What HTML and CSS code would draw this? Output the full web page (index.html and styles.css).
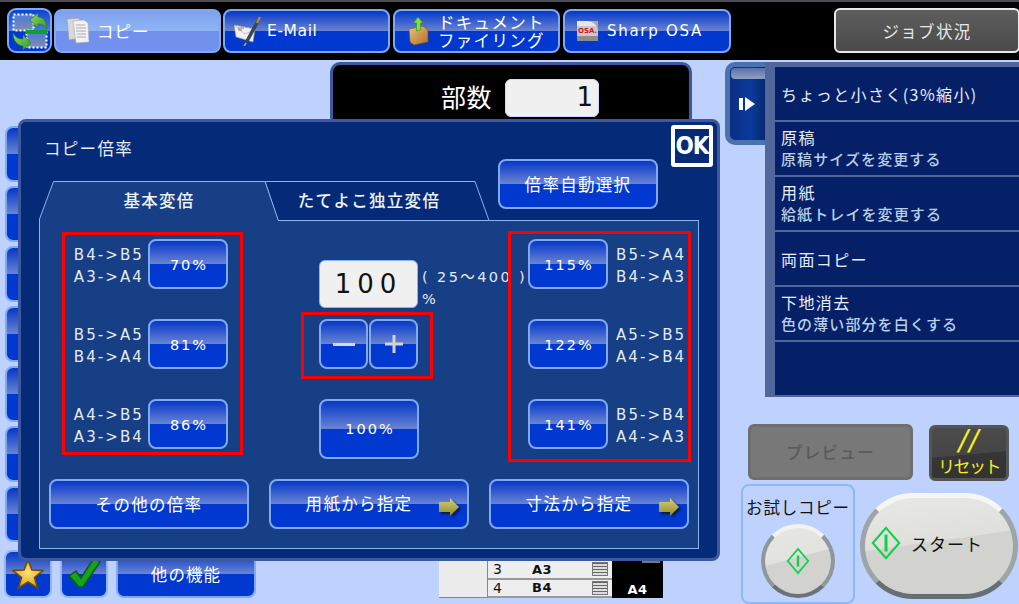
FILE: index.html
```html
<!DOCTYPE html>
<html lang="ja">
<head>
<meta charset="utf-8">
<title>コピー倍率</title>
<link rel="stylesheet" href="styles.css">
</head>
<body>
<div class="page">
  <header class="topbar">
    <button class="btn mode-switch">
      <svg viewBox="0 0 40 40" width="40" height="40">
        <defs>
          <linearGradient id="pane" x1="0" y1="0" x2="0" y2="1"><stop offset="0" stop-color="#4f86e8"/><stop offset=".3" stop-color="#5a7cc8"/><stop offset="1" stop-color="#7f8fb8"/></linearGradient>
          <linearGradient id="arw" x1="0" y1="0" x2="1" y2="1"><stop offset="0" stop-color="#8fd860"/><stop offset="1" stop-color="#2f9a2a"/></linearGradient>
        </defs>
        <rect x="3.5" y="3.5" width="20" height="16" fill="url(#pane)" stroke="#fff" stroke-width="2" stroke-dasharray="2 2"/>
        <rect x="16.5" y="20.5" width="20" height="16" fill="url(#pane)" stroke="#fff" stroke-width="2" stroke-dasharray="2 2"/>
        <rect x="16" y="19" width="21" height="4" fill="#0aa02c"/>
        <path d="M20 9 L28 2 L28 6 C33 6 37 10 37 18 C34 14 32 13 28 13 L28 17 Z" fill="url(#arw)" stroke="#2a7a20" stroke-width=".6"/>
        <path d="M21 32 L13 39 L13 35 C8 35 3 30 3 22 C6 27 9 28 13 28 L13 24 Z" fill="url(#arw)" stroke="#2a7a20" stroke-width=".6"/>
      </svg>
    </button>
    <button class="btn tab-btn active">
      <svg class="tab-icon" viewBox="0 0 26 30" width="26" height="30"><path d="M2 3 L13 2 L16 5 L16 22 L4 24 Z" fill="#d8d8d8" stroke="#999" stroke-width=".6"/><path d="M8 5 L19 4 L23 7 L24 26 L11 27 Z" fill="#f2f2f2" stroke="#aaa" stroke-width=".6"/><path d="M11 9H20M11 12H21M11 15H21M12 18H21M12 21H21" stroke="#999" stroke-width=".8"/></svg>
      <span class="tab-label">コピー</span>
    </button>
    <button class="btn tab-btn">
      <svg class="tab-icon" viewBox="0 0 28 30" width="28" height="30"><path d="M0 9 L21 13 L19 26 L2 21 Z" fill="#f1f1f1" stroke="#999" stroke-width=".6"/><path d="M1 10 L11 18 L20 14" fill="none" stroke="#aaa" stroke-width=".7"/><path d="M4 12H10M4 14H8" stroke="#666" stroke-width=".8"/><path d="M12 27 L24 5" stroke="#3c4458" stroke-width="3.4"/><path d="M23 7 L26 1" stroke="#b98a2a" stroke-width="2.2"/><path d="M12 27 L10 30" stroke="#c9a23a" stroke-width="1.6"/></svg>
      <span class="tab-label">E-Mail</span>
    </button>
    <button class="btn tab-btn doc-tab">
      <svg class="tab-icon" viewBox="0 0 20 28" width="20" height="28">
        <defs><linearGradient id="fold" x1="0" y1="0" x2="1" y2="1"><stop offset="0" stop-color="#f0c078"/><stop offset="1" stop-color="#b06f28"/></linearGradient></defs>
        <path d="M0 12 L14 9 L19 13 L19 25 L5 28 L1 25 Z" fill="url(#fold)" stroke="#7a4c18" stroke-width=".6"/>
        <path d="M9 0 L14 6 L11.5 6 L11.5 13 L7.5 14 L7.5 6 L4.5 6 Z" fill="#7fe04a" stroke="#2f8a20" stroke-width=".6"/>
      </svg>
      <span class="tab-label two-line">ドキュメント<br>ファイリング</span>
    </button>
    <button class="btn tab-btn osa-tab">
      <svg class="tab-icon" viewBox="0 0 21 20" width="21" height="20"><rect width="21" height="20" fill="#c9c9c9"/><rect width="21" height="5" fill="#e6e6e6"/><rect y="15" width="21" height="5" fill="#8d8d8d"/><path d="M10 0 A11 11 0 0 1 21 10 L21 0 Z" fill="#aaa"/><text x="1" y="12" class="osa-text">OSA.</text></svg>
      <span class="tab-label osa-label">Sharp OSA</span>
    </button>
    <button class="job-btn">ジョブ状況</button>
  </header>

  <main class="main">
    <div class="left-col">
      <div class="side-btns">
        <button class="btn side-btn"></button>
        <button class="btn side-btn"></button>
        <button class="btn side-btn"></button>
        <button class="btn side-btn"></button>
        <button class="btn side-btn"></button>
        <button class="btn side-btn"></button>
        <button class="btn side-btn"></button>
      </div>
      <div class="bottom-btns">
        <button class="btn fav-btn">
          <svg viewBox="0 0 32 32" width="32" height="32">
            <defs><radialGradient id="gold" cx=".5" cy=".45" r=".6"><stop offset="0" stop-color="#ffe27a"/><stop offset="1" stop-color="#d99a10"/></radialGradient></defs>
            <path d="M16 2 L20 12 L31 12.5 L22.5 19.5 L25.5 30 L16 24 L6.5 30 L9.5 19.5 L1 12.5 L12 12 Z" fill="url(#gold)" stroke="#6a4c06" stroke-width="1.6"/>
          </svg>
        </button>
        <button class="btn fav-btn">
          <svg viewBox="0 0 34 32" width="34" height="32"><path d="M2 18 L9 13 L14 20 L27 0 L33 4 L16 29 L12 29 Z" fill="#16a11e" stroke="#0b5a12" stroke-width="1.5"/></svg>
        </button>
        <button class="btn more-btn">他の機能</button>
      </div>
    </div>

    <div class="center-col">
      <div class="copies">
        <span class="copies-label">部数</span>
        <span class="copies-input">1</span>
      </div>
      <div class="paper-table">
        <div class="pt-blank"></div>
        <div class="pt-rows">
          <div class="pt-row"><span class="pt-no">3</span><span class="pt-size">A3</span><span class="pt-tray"></span></div>
          <div class="pt-row"><span class="pt-no">4</span><span class="pt-size">B4</span><span class="pt-tray"></span></div>
        </div>
        <div class="pt-out"><span class="pt-out-tick"></span><span>A4</span></div>
      </div>
    </div>

    <div class="right-col">
      <div class="panel">
        <div class="panel-tab">
          <span class="panel-tab-top"></span>
          <svg viewBox="0 0 16 14" width="16" height="14"><rect x="0" y="1" width="4" height="12" fill="#fff"/><path d="M6 0 L16 7 L6 14 Z" fill="#fff"/></svg>
        </div>
        <div class="panel-list">
          <div class="panel-row single">ちょっと小さく(3%縮小)</div>
          <div class="panel-row"><div>原稿</div><div class="sub">原稿サイズを変更する</div></div>
          <div class="panel-row"><div>用紙</div><div class="sub">給紙トレイを変更する</div></div>
          <div class="panel-row single">両面コピー</div>
          <div class="panel-row"><div>下地消去</div><div class="sub">色の薄い部分を白くする</div></div>
          <div class="panel-row empty"></div>
        </div>
      </div>
      <div class="action-top">
        <button class="preview-btn">プレビュー</button>
        <button class="reset-btn"><span class="reset-slashes">//</span><span class="reset-label">リセット</span></button>
      </div>
      <div class="action-bottom">
        <div class="trial">
          <div class="trial-label">お試しコピー</div>
          <button class="round-start">
            <svg viewBox="0 0 26 30" width="26" height="28"><path d="M13 2 L24 15 L13 28 L2 15 Z" fill="none" stroke="#0ed24a" stroke-width="1.8"/><path d="M13 9V21" stroke="#0ed24a" stroke-width="2.6"/></svg>
          </button>
        </div>
        <button class="start-btn">
          <svg viewBox="0 0 32 36" width="32" height="34"><path d="M16 2 L30 18 L16 34 L2 18 Z" fill="none" stroke="#0ed24a" stroke-width="2.2"/><path d="M16 9V27" stroke="#0ed24a" stroke-width="3.2"/></svg>
          <span>スタート</span>
        </button>
      </div>
    </div>
  </main>

  <section class="dialog">
    <div class="dialog-head">
      <div class="dialog-title">コピー倍率</div>
      <button class="auto-btn btn">倍率自動選択</button>
      <button class="ok-btn">OK</button>
    </div>
    <div class="tabs">
      <svg class="tabs-art" viewBox="0 0 452 40" width="452" height="40"><path d="M239 39.5 L226 .5 L436 .5 L450 39.5 Z" fill="#052a77" stroke="#8ab2f0"/><path d="M.5 40 L.5 38 L14.5 .5 L226 .5 L239.5 40 Z" fill="#163f85"/><path d="M.5 40 L.5 38 L14.5 .5 L226 .5 L239.5 40" fill="none" stroke="#8ab2f0"/></svg>
      <div class="tab-a">基本変倍</div>
      <div class="tab-b">たてよこ独立変倍</div>
    </div>
    <div class="tab-panel">
      <div class="ratio-grid">
        <div class="ratio-group left">
          <div class="ratio-row"><div class="ratio-text">B4-&gt;B5<br>A3-&gt;A4</div><button class="btn ratio-btn">70%</button></div>
          <div class="ratio-row"><div class="ratio-text">B5-&gt;A5<br>B4-&gt;A4</div><button class="btn ratio-btn">81%</button></div>
          <div class="ratio-row"><div class="ratio-text">A4-&gt;B5<br>A3-&gt;B4</div><button class="btn ratio-btn">86%</button></div>
        </div>
        <div class="ratio-center">
          <div class="value-row">
            <div class="value-input">100</div>
            <div class="value-range"><div>( 25～400 )</div><div>%</div></div>
          </div>
          <div class="stepper">
            <button class="btn step-btn"><svg viewBox="0 0 24 24" width="24" height="24"><rect x="1" y="11" width="22" height="3" fill="#d6d8dc"/></svg></button>
            <button class="btn step-btn"><svg viewBox="0 0 22 22" width="22" height="22"><path d="M9.5 2h3v7.5h7.5v3h-7.5V20h-3v-7.5H2v-3h7.5z" fill="#d0d2d6"/></svg></button>
          </div>
          <button class="btn hundred-btn">100%</button>
        </div>
        <div class="ratio-group right">
          <div class="ratio-row"><button class="btn ratio-btn">115%</button><div class="ratio-text">B5-&gt;A4<br>B4-&gt;A3</div></div>
          <div class="ratio-row"><button class="btn ratio-btn">122%</button><div class="ratio-text">A5-&gt;B5<br>A4-&gt;B4</div></div>
          <div class="ratio-row"><button class="btn ratio-btn">141%</button><div class="ratio-text">B5-&gt;B4<br>A4-&gt;A3</div></div>
        </div>
      </div>
      <div class="panel-actions">
        <button class="btn wide-btn">その他の倍率</button>
        <button class="btn wide-btn arrow">用紙から指定<svg viewBox="0 0 20 18" width="20" height="18"><defs><linearGradient id="ag" x1="0" y1="0" x2="0" y2="1"><stop offset="0" stop-color="#d8d070"/><stop offset="1" stop-color="#8f8a30"/></linearGradient></defs><path d="M0 4 H11 V0 L20 9 L11 18 V14 H0 Z" fill="url(#ag)"/></svg></button>
        <button class="btn wide-btn arrow">寸法から指定<svg viewBox="0 0 20 18" width="20" height="18"><path d="M0 4 H11 V0 L20 9 L11 18 V14 H0 Z" fill="url(#ag)"/></svg></button>
      </div>
    </div>
  </section>
</div>
</body>
</html>
```

FILE: styles.css
```css
* { box-sizing: border-box; }
html, body { margin: 0; padding: 0; }
body {
  width: 1019px;
  height: 604px;
  overflow: hidden;
  background: #bfd2fd;
  font-family: "DejaVu Sans", "Noto Sans CJK JP", sans-serif;
  color: #fff;
}
button { font-family: inherit; color: inherit; padding: 0; cursor: default; }
.page { position: relative; width: 1019px; height: 604px; overflow: hidden; }

.btn {
  display: flex;
  align-items: center;
  justify-content: center;
  border: 2px solid #7fa9f5;
  border-radius: 8px;
  background: linear-gradient(#0638c8 0, #6a84d2 50%, #0038d0 50%, #0038d0 100%);
  color: #fff;
  font-size: 14px;
}

/* top bar */
.topbar {
  display: flex;
  align-items: flex-start;
  height: 60px;
  padding: 7px 0 0 7px;
  background: #000;
  border-top: 2px solid #4c4c54;
}
.mode-switch { flex: none; width: 45px; height: 45px; margin-top: -1px; margin-right: 2px; border-radius: 9px; background: linear-gradient(#0a45d0 0, #4a7be0 50%, #0038d0 50%); }
.tab-btn { flex: none; width: 167px; height: 44px; margin-right: 2px; justify-content: flex-start; padding-left: 9px; }
.tab-btn.active { background: linear-gradient(#7fa0ec 0, #8fb5f5 50%, #7290ee 50%); }
.doc-tab { margin-left: 1px; margin-right: 3px; padding-left: 14px; }
.osa-tab { width: 168px; padding-left: 12px; }
.tab-icon { flex: none; }
.tab-label { margin-left: 5px; letter-spacing: .6px; font-size: 15.5px; }
.active .tab-label { margin-left: 6px; font-family: "Noto Sans CJK JP", sans-serif; font-size: 16.5px; letter-spacing: 1px; }
.two-line { font-family: "Noto Sans CJK JP", sans-serif; font-size: 16.5px; line-height: 18px; letter-spacing: 1.3px; margin-left: 9px; text-align: left; }
.osa-label { letter-spacing: 1.7px; font-size: 15px; margin-left: 9px; }
.osa-text { font: bold 7px "DejaVu Sans", sans-serif; fill: #d8102a; }
.job-btn {
  flex: none;
  margin-left: auto;
  width: 186px;
  height: 45px;
  margin-top: -1px;
  margin-right: -1px;
  border: 2px solid #e8e8e8;
  border-radius: 6px;
  background: linear-gradient(#5e5e5e, #4a4a4a);
  font-size: 16.5px;
  font-family: "Noto Sans CJK JP", sans-serif;
  color: #e6e6e6;
  letter-spacing: 1.3px;
}

/* main columns */
.main { display: flex; height: 544px; }
.left-col { width: 330px; padding: 66px 0 0 5px; flex: none; }
.side-btns { display: flex; flex-direction: column; gap: 4px; }
.side-btn { width: 60px; height: 56px; }
.bottom-btns { display: flex; gap: 8px; margin-top: 8px; margin-left: -1px; }
.fav-btn { width: 48px; height: 48px; border-color: #8fb5f5; }
.more-btn { width: 140px; height: 48px; font-family: "Noto Sans CJK JP", sans-serif; font-size: 16.5px; letter-spacing: 1.1px; }

.center-col { width: 395px; flex: none; display: flex; flex-direction: column; }
.copies {
  width: 362px;
  height: 70px;
  margin-top: 2px;
  padding: 14px 0 0 108px;
  display: flex;
  align-items: flex-start;
  background: #000;
  border: 3px solid #3c58a0;
  border-bottom: 0;
  border-radius: 10px 10px 0 0;
}
.copies-label { font: 25px/32px "Noto Sans CJK JP", sans-serif; color: #fff; width: 64px; margin-top: 1px; letter-spacing: .5px; }
.copies-input {
  width: 94px;
  height: 38px;
  background: #f0f0f0;
  border-radius: 6px;
  border: 1px solid #c9dcff;
  color: #111;
  font: 26px/35px "DejaVu Sans", sans-serif;
  text-align: right;
  padding-right: 5px;
}
.paper-table { margin-top: auto; margin-bottom: 6px; margin-left: 109px; width: 224px; height: 37px; display: flex; color: #111; }
.pt-blank { width: 49px; background: #ececec; border-bottom: 1px solid #888; border-right: 1px solid #888; }
.pt-rows { width: 124px; background: #eee; }
.pt-row { height: 18.5px; display: flex; align-items: center; border-bottom: 2px solid #999; font-size: 13px; }
.pt-no { width: 44px; padding-left: 5px; font-size: 14px; }
.pt-size { width: 60px; font-weight: bold; font-size: 13px; letter-spacing: .5px; }
.pt-tray { width: 16px; height: 14px; border: 1px solid #777; background: repeating-linear-gradient(#666 0, #666 1px, #ddd 1px, #ddd 3px); }
.pt-out { width: 51px; background: #000; color: #fff; position: relative; font-size: 13px; font-weight: bold; text-align: center; padding-top: 21px; letter-spacing: .5px; }
.pt-out-tick { position: absolute; top: 0; right: 3px; width: 18px; height: 2px; background: #777; }

/* right column */
.right-col { flex: 1; min-width: 0; padding-top: 3px; }
.panel { display: flex; height: 335px; margin-top: -1px; }
.panel-tab {
  width: 40px;
  height: 83px;
  background: linear-gradient(90deg, #0b2f80, #0a3a9c 60%, #08276e);
  border: 5px solid #4a72b0;
  border-right: 0;
  border-radius: 10px 0 0 10px;
  display: flex;
  align-items: center;
  justify-content: center;
  position: relative;
  padding-right: 2px;
}
.panel-tab-top { position: absolute; left: 1px; right: 0; top: 1px; height: 11px; border-radius: 4px 0 0 4px; background: linear-gradient(#5570a8, #8fa0c4); }
.panel-list { flex: 1; background: #51669a; padding: 5px 0 2px 10px; display: flex; flex-direction: column; gap: 2px; }
.panel-row {
  background: #062068;
  height: 53px;
  padding: 0 0 0 6px;
  display: flex;
  flex-direction: column;
  justify-content: center;
  font-family: "Noto Sans CJK JP", sans-serif;
  font-size: 16px;
  line-height: 21px;
  color: #e6edf8;
  letter-spacing: 1.4px;
  white-space: nowrap;
}
.panel-row.single { padding-top: 2px; }
.panel-row .sub { color: #b9d0e8; font-size: 15px; font-weight: 500; line-height: 22px; letter-spacing: 1.1px; }
.panel-row.empty { flex: 1; height: auto; }

.action-top { display: flex; align-items: flex-start; padding: 27px 0 0 23px; gap: 16px; }
.preview-btn {
  width: 165px;
  height: 56px;
  border: 3px solid #6e6e6e;
  border-radius: 6px;
  background: #787878;
  color: #5b5b5b;
  font: 500 16.5px "Noto Sans CJK JP", sans-serif;
  letter-spacing: 1.3px;
}
.reset-btn {
  width: 80px;
  height: 56px;
  border: 3px solid #555;
  border-radius: 6px;
  background: linear-gradient(175deg, #4c4c4c 0, #454545 52%, #363636 53%, #333 100%);
  color: #f5ee20;
  display: flex;
  flex-direction: column;
  align-items: center;
  justify-content: flex-start;
  margin-top: 1px;
  font-family: "Noto Sans CJK JP", sans-serif;
}
.reset-slashes { font: italic 28px/26px "DejaVu Sans", sans-serif; letter-spacing: 1px; }
.reset-label { font-size: 17px; line-height: 20px; letter-spacing: -1.5px; margin-top: 2px; }

.action-bottom { display: flex; align-items: flex-start; padding: 3px 0 0 16px; gap: 5px; }
.trial {
  width: 114px;
  height: 120px;
  border: 2px solid #8ab8f8;
  border-radius: 8px;
  display: flex;
  flex-direction: column;
  align-items: center;
  color: #111;
}
.trial-label { font: 16.5px/20px "Noto Sans CJK JP", sans-serif; letter-spacing: .8px; margin-top: 11px; white-space: nowrap; }
.round-start {
  width: 74px;
  height: 74px;
  margin-top: 7px;
  border-radius: 50%;
  border: 4px solid #8e979b;
  border-top-color: #f2f2f0;
  border-bottom-color: #6a7478;
  background: linear-gradient(165deg, #e6e6e2 0, #e2e2de 45%, #d2d3ce 46%);
  display: flex;
  align-items: center;
  justify-content: center;
}
.start-btn {
  width: 158px;
  height: 106px;
  margin-top: 9px;
  border-radius: 53px;
  border: 5px solid #9ca5a8;
  border-top-color: #f6f6f4;
  border-bottom-color: #667074;
  background: linear-gradient(172deg, #e8e8e4 0, #dfdfdb 45%, #d2d3ce 46%);
  display: flex;
  align-items: center;
  padding: 0 0 6px 5px;
  color: #111;
  font: 17px "Noto Sans CJK JP", sans-serif;
  letter-spacing: 1px;
}
.start-btn span { margin-left: 9px; }

/* dialog */
.dialog {
  position: absolute;
  left: 18px;
  top: 119px;
  width: 702px;
  height: 442px;
  padding: 0 18px 10px 18px;
  background: #052a77;
  border: 3px solid #3c58a0;
  border-radius: 8px;
}
.dialog-head { position: relative; height: 37px; }
.dialog-title { position: absolute; left: 5px; top: 15px; font: 16.5px/22px "Noto Sans CJK JP", sans-serif; letter-spacing: 1.3px; color: #e6eef8; white-space: nowrap; }
.auto-btn { position: absolute; left: 459px; top: 37px; width: 160px; height: 50px; font-family: "Noto Sans CJK JP", sans-serif; font-size: 16.5px; letter-spacing: 1.3px; }
.ok-btn {
  position: absolute;
  left: 632px;
  top: 3px;
  width: 42px;
  height: 42px;
  background: #052a77;
  color: #fff;
  border: 4px solid #fff;
  border-radius: 3px;
  font: bold 24px/32px "DejaVu Sans Condensed", "DejaVu Sans", sans-serif;
  letter-spacing: -1px;
}

.tabs { position: relative; height: 40px; margin-top: 22px; width: 452px; display: flex; z-index: 1; }
.tabs-art { position: absolute; left: 0; top: 0; }
.tab-a { position: relative; width: 240px; text-align: center; font: 500 16.5px/37px "Noto Sans CJK JP", sans-serif; letter-spacing: 1.3px; color: #eef3fb; padding-top: 1px; }
.tab-b { position: relative; width: 180px; text-align: center; font: 500 16.5px/37px "Noto Sans CJK JP", sans-serif; letter-spacing: 1.3px; color: #eef3fb; padding-top: 1px; white-space: nowrap; }

.tab-panel {
  margin-top: -1px;
  height: 329px;
  width: 660px;
  background: #163f85;
  border: 1px solid #8ab2f0;
  padding: 11px 0 0 22px;
  position: relative;
}
.tab-panel::before { content: ""; position: absolute; left: 0; top: -1px; width: 238px; height: 2px; background: #163f85; }

.ratio-grid { display: flex; align-items: flex-start; position: relative; }
.ratio-group { flex: none; border: 3px solid #f00; display: flex; flex-direction: column; gap: 30px; padding-top: 4px; position: relative; z-index: 1; }
.ratio-group.left { width: 181px; height: 223px; align-items: flex-end; padding-right: 12px; }
.ratio-group.right { width: 183px; height: 231px; margin-left: 75px; padding-left: 17px; margin-top: -1px; padding-top: 5px; }
.ratio-row { display: flex; align-items: center; gap: 6px; height: 50px; }
.ratio-text { width: 72px; font-size: 15px; line-height: 22px; margin-top: 3px; text-align: right; letter-spacing: 2.1px; color: #e6eaf0; white-space: nowrap; }
.left .ratio-text { margin-right: -2px; }
.right .ratio-text { text-align: left; margin-left: 2px; }
.ratio-btn { width: 80px; height: 50px; font-size: 14.5px; letter-spacing: 2px; flex: none; padding: 2px 0 0 2px; }

.ratio-center { flex: none; width: 132px; margin-left: 58px; padding-top: 28px; position: relative; }
.value-row { display: flex; align-items: flex-start; margin-left: 18px; gap: 4px; height: 52px; }
.value-input { flex: none; width: 99px; height: 48px; background: #f0f0f0; border: 1px solid #8ab2f0; border-radius: 6px; color: #111; font-size: 26px; line-height: 47px; text-align: center; letter-spacing: 6px; }
.value-range { font-size: 14.5px; line-height: 22px; letter-spacing: 2.4px; white-space: nowrap; color: #e6eaf0; position: relative; top: 6px; }
.stepper { border: 3px solid #f00; width: 132px; height: 67px; display: flex; gap: 1px; padding: 4px 0 0 15px; }
.step-btn { width: 49px; height: 50px; }
.hundred-btn { width: 100px; height: 60px; margin: 20px 0 0 18px; letter-spacing: 2px; font-size: 14.5px; padding-left: 2px; }

.panel-actions { display: flex; gap: 20px; margin: 17px 0 0 -13px; }
.wide-btn { flex: none; width: 200px; height: 50px; font-family: "Noto Sans CJK JP", sans-serif; font-size: 16.5px; letter-spacing: 1.3px; position: relative; }
.wide-btn.arrow { padding-right: 20px; padding-bottom: 2px; }
.wide-btn svg { position: absolute; right: 8px; top: 17px; filter: drop-shadow(2px 2px 1px #0a1a50); }
```
